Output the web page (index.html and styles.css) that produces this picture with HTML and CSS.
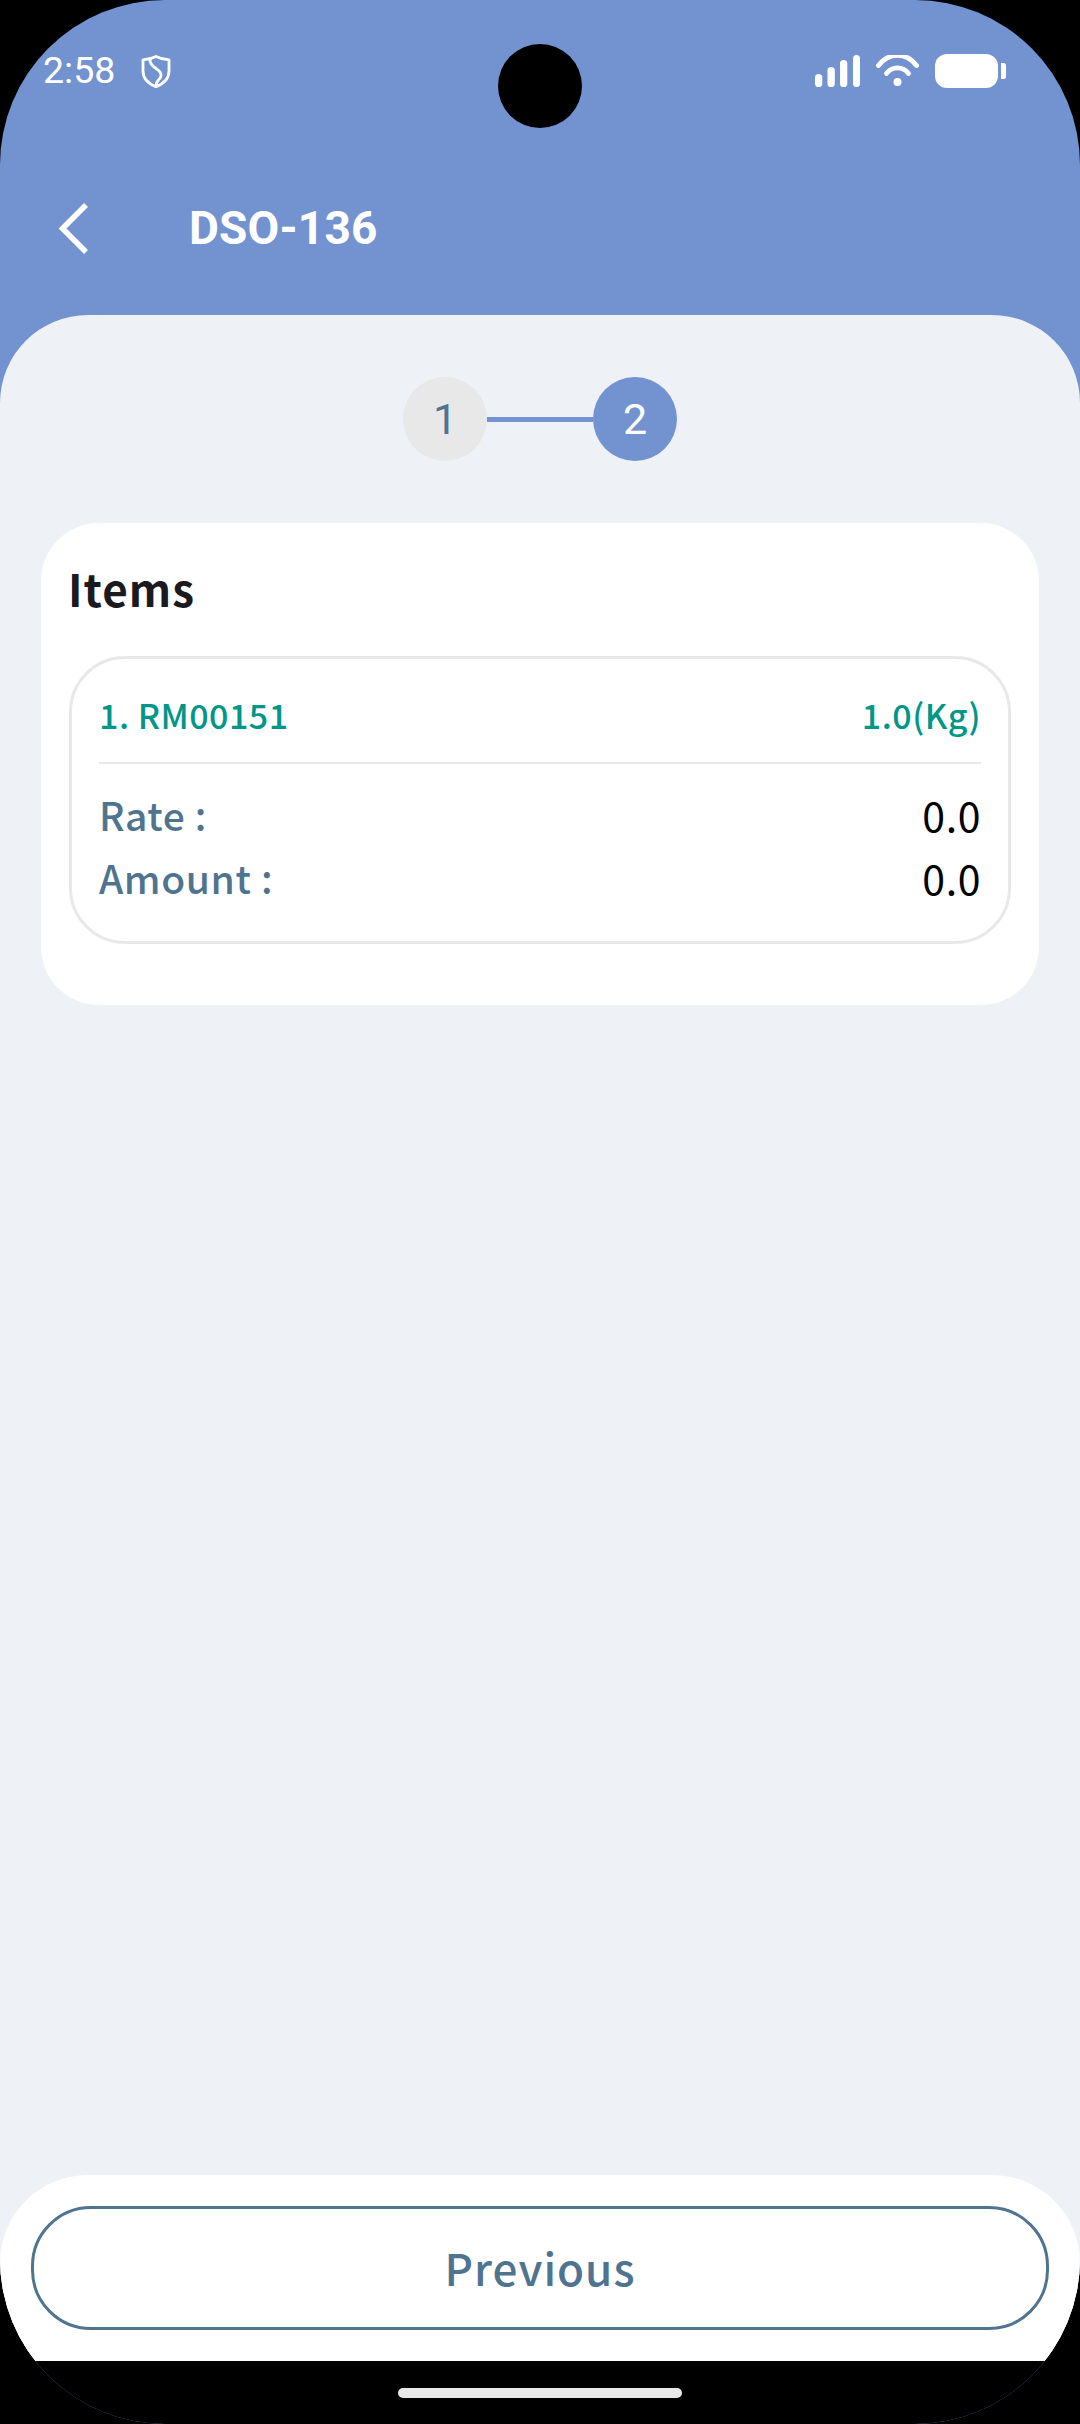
FILE: index.html
```html
<!DOCTYPE html>
<html lang="en">
<head>
<meta charset="utf-8">
<title>DSO-136</title>
<link rel="stylesheet" href="styles.css">
</head>
<body>
<div class="screen">
  <div class="camera"></div>
  <header class="header">
    <div class="status">
      <div class="status-left">
        <span class="time">2:58</span>
        <svg class="shield" viewBox="0 0 30 33" fill="none" stroke="#fff" stroke-width="2.800" stroke-linejoin="round" stroke-linecap="round">
          <path d="M15 1.500C18.500 3.300 23 4.500 28 4.800V16C28 23.500 22.500 28.800 15 31.800C7.500 28.800 2 23.500 2 16V4.800C7 4.500 11.500 3.300 15 1.500Z"/>
          <path d="M9 3.500C8 9 13 12 17 15C21 18 21 22 17.500 25C15.500 27 15 29 15 31.500"/>
        </svg>
      </div>
      <div class="status-right">
        <svg class="signal" viewBox="0 0 45 32" fill="#fff">
          <rect x="0" y="19" width="7.300" height="13" rx="3.600"/>
          <rect x="12.500" y="12" width="7.300" height="20" rx="3.600"/>
          <rect x="25" y="5" width="7.300" height="27" rx="3.600"/>
          <rect x="38" y="0" width="7" height="32" rx="3.500"/>
        </svg>
        <svg class="wifi" viewBox="0 0 43 32" fill="none" stroke="#fff" stroke-width="4.800" stroke-linecap="round">
          <path d="M2.500 10.500C13 -3 30 -3 40.500 10.500"/>
          <path d="M10.500 18.500C16 11 27 11 32.500 18.500"/>
          <circle cx="21.500" cy="27" r="4" fill="#fff" stroke="none"/>
        </svg>
        <svg class="battery" viewBox="0 0 71 34" fill="#fff">
          <rect x="0" y="0" width="63" height="34" rx="12"/>
          <path d="M66 9h2.500a2.500 2.500 0 0 1 2.500 2.500v11a2.500 2.500 0 0 1-2.500 2.500H66Z"/>
        </svg>
      </div>
    </div>
    <div class="titlebar">
      <svg class="back" viewBox="0 0 30 51" fill="none" stroke="#fff" stroke-width="5.500">
        <path d="M28 2L4.500 25.500L28 49"/>
      </svg>
      <h1 class="title">DSO-136</h1>
    </div>
  </header>

  <main class="main">
    <div class="stepper">
      <span class="step step-done">1</span>
      <span class="step-line"></span>
      <span class="step step-active">2</span>
    </div>

    <section class="card">
      <h2 class="card-title">Items</h2>
      <div class="item">
        <div class="item-head">
          <span>1. RM00151</span>
          <span>1.0(Kg)</span>
        </div>
        <div class="item-rows">
          <div class="item-row"><span class="label">Rate :</span><span class="value">0.0</span></div>
          <div class="item-row"><span class="label">Amount :</span><span class="value">0.0</span></div>
        </div>
      </div>
    </section>

    <footer class="footer">
      <button class="btn" type="button">Previous</button>
    </footer>
  </main>

  <nav class="navbar"><span class="home"></span></nav>
</div>
</body>
</html>
```

FILE: styles.css
```css
* { box-sizing: border-box; }
html, body { margin: 0; padding: 0; background: #000; }
body { width: 1080px; height: 2424px; overflow: hidden; }

.screen {
  position: relative;
  width: 1080px;
  height: 2424px;
  display: flex;
  flex-direction: column;
  background: #7293cf;
  border-radius: 165px;
  overflow: hidden;
  font-family: "Noto Sans CJK SC", "Noto Sans", sans-serif;
}

.camera {
  position: absolute;
  left: 498px;
  top: 44px;
  width: 84px;
  height: 84px;
  border-radius: 50%;
  background: #000;
}

.header { height: 315px; flex: none; color: #fff; font-family: Roboto, sans-serif; }

.status {
  height: 203px;
  padding: 50px 74px 0 43px;
  display: flex;
  justify-content: space-between;
  align-items: flex-start;
}
.status-left { display: flex; align-items: flex-start; gap: 26px; height: 40px; }
.time { font-size: 37.500px; line-height: 40px; }
.shield { width: 30px; height: 33px; margin-top: 5px; }
.status-right { display: flex; align-items: flex-start; padding-top: 4px; gap: 16px; }
.signal { width: 45px; height: 32px; margin-top: 1px; }
.wifi { width: 43px; height: 32px; margin-top: 1px; }
.battery { width: 71px; height: 34px; }

.titlebar { display: flex; align-items: center; padding-left: 58px; height: 51px; }
.back { width: 30px; height: 51px; flex: none; }
.title {
  margin: 0 0 0 101px;
  font-size: 46px;
  font-weight: 700;
  line-height: 51px;
  letter-spacing: 0.2px;
}

.main {
  flex: 1;
  min-height: 0;
  display: flex;
  flex-direction: column;
  background: #eef1f6;
  border-radius: 88px 88px 0 0;
}

.stepper {
  display: flex;
  justify-content: center;
  align-items: center;
  margin-top: 62px;
}
.step {
  width: 84px;
  height: 84px;
  border-radius: 50%;
  display: flex;
  align-items: center;
  justify-content: center;
  font-family: Roboto, sans-serif;
  font-size: 43px;
}
.step-done { background: #e8e8e8; color: #4f7490; }
.step-active { background: #7293cf; color: #fff; }
.step-line { width: 106px; height: 5px; background: #7293cf; }

.card {
  margin: 62px 41px 0;
  height: 482px;
  padding: 35px 28px 0;
  background: #fff;
  border-radius: 58px;
}
.card-title {
  margin: 0 0 0 -1px;
  font-size: 44px;
  font-weight: 700;
  line-height: 60px;
  color: #1b1a1f;
  letter-spacing: 1px;
}

.item {
  margin-top: 38px;
  height: 288px;
  padding: 0 27px;
  border: 3px solid #e8e8e8;
  border-radius: 56px;
}
.item-head {
  height: 105px;
  padding-top: 8px;
  display: flex;
  justify-content: space-between;
  align-items: center;
  border-bottom: 2px solid #e8e8e8;
  color: #009688;
  font-size: 34px;
  font-weight: 500;
  letter-spacing: 0.5px;
}
.item-rows { padding-top: 22px; display: flex; flex-direction: column; gap: 7px; }
.item-row {
  display: flex;
  justify-content: space-between;
  align-items: center;
  height: 56px;
  font-size: 39px;
  letter-spacing: 0.6px;
}
.label { color: #4f7490; font-weight: 500; }
.value { color: #000; font-size: 41px; }

.footer {
  margin-top: auto;
  height: 186px;
  padding: 31px 31px 0;
  background: #fff;
  border-radius: 88px 88px 0 0;
}
.btn {
  display: block;
  width: 100%;
  height: 124px;
  padding: 0 0 2px;
  background: #fff;
  border: 3px solid #4f7490;
  border-radius: 60px;
  color: #4f7490;
  font-family: inherit;
  font-size: 44px;
  font-weight: 500;
  letter-spacing: 1px;
}

.navbar {
  flex: none;
  height: 63px;
  background: #000;
  display: flex;
  justify-content: center;
  padding-top: 27px;
}
.home { width: 284px; height: 10px; border-radius: 5px; background: #e9e9e9; }
```
